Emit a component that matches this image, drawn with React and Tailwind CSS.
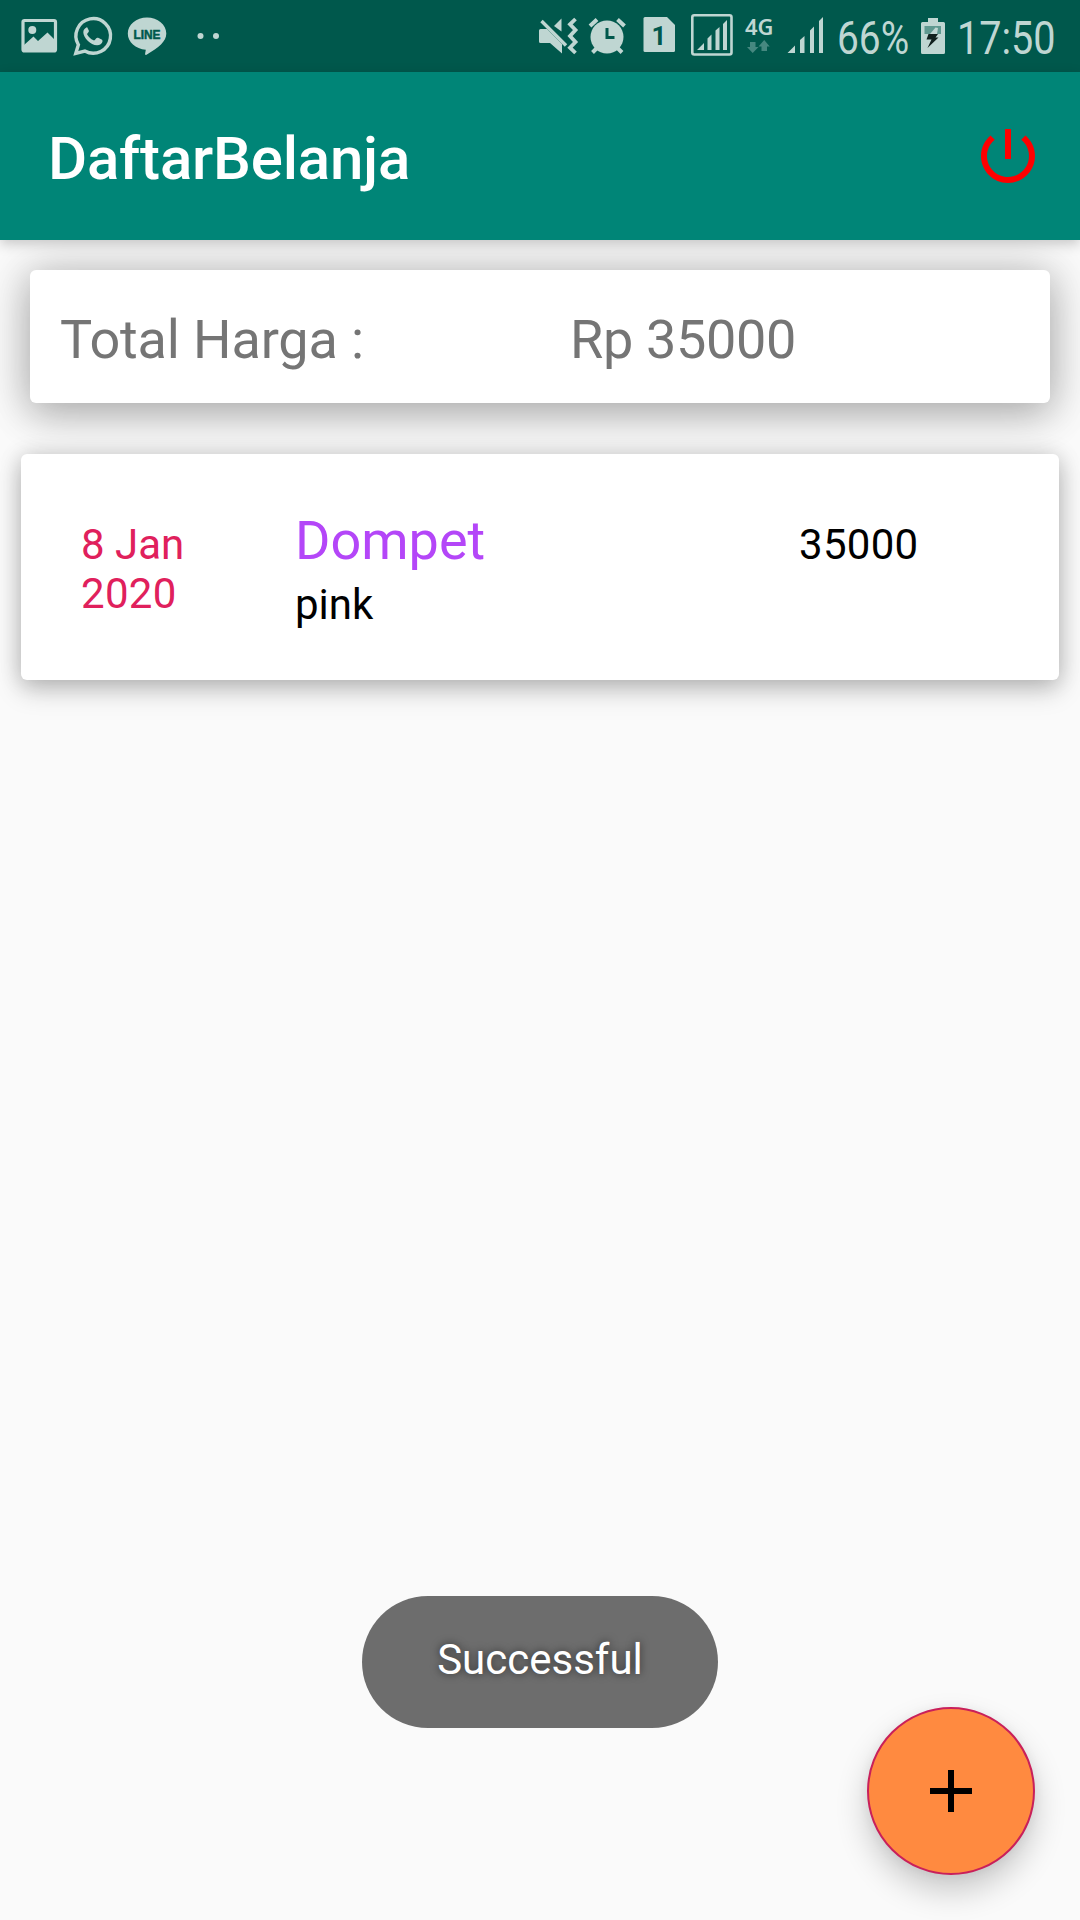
import React from "react";

const INK = "#bfd6d2";
const BAR = "#00584c";

function ImageIcon() {
  return (
    <svg className="ml-[18px] h-12 w-11 shrink-0" viewBox="18 12 44 48">
      <rect x="23" y="20.5" width="32.5" height="30.5" rx="1.5" fill="none" stroke={INK} strokeWidth="3.2" />
      <circle cx="32.3" cy="30" r="4" fill={INK} />
      <path d="M24 45 L33.5 36.5 L38 41 L47.5 32.5 L55 40 V51 H24 Z" fill={INK} />
    </svg>
  );
}

function WhatsAppIcon() {
  return (
    <svg className="ml-2 h-12 w-[46px] shrink-0" viewBox="70 12 46 48">
      <path d="M75.8 53.3 L78.4 44.8 A17.3 17.3 0 1 1 84.8 51 Z" fill="none" stroke={INK} strokeWidth="3.4" />
      <path
        d="M86.5 27.4c-1.6.6-3.2 2.4-3.2 4.8 0 5.200 7.200 13 13.800 13 2.700 0 5-1.300 5.400-3.700.1-1-.2-1.500-.9-1.900l-3.500-1.800c-.7-.3-1.300-.2-1.800.4l-1.500 1.800c-.4.4-.8.500-1.300.3-2.800-1.200-5-3.200-6.300-5.700-.2-.5-.1-.8.2-1.200l1.200-1.500c.3-.4.4-.8.200-1.300l-1.500-3c-.2-.4-.4-.4-.8-.3z"
        fill={INK}
      />
    </svg>
  );
}

function LineIcon() {
  return (
    <svg className="ml-2 h-12 w-[46px] shrink-0" viewBox="124 12 46 48">
      <path d="M147 17.500c10.700 0 19.300 7 19.300 16 0 8-7.500 14-19.800 21.200-1 .5-1.600 0-1.400-1l.7-3.900c-10.200-.7-18-7.500-18-16.200 0-9.100 8.500-16.100 19.200-16.100z" fill={INK} />
      <text x="133.500" y="38.700" textLength="27" lengthAdjust="spacingAndGlyphs" fill={BAR} stroke={BAR} strokeWidth=".5" className="font-['Liberation_Sans'] text-[12px] font-bold">
        LINE
      </text>
    </svg>
  );
}

function DotsIcon() {
  return (
    <svg className="ml-[26px] h-12 w-6 shrink-0" viewBox="196 12 24 48" fill={INK}>
      <circle cx="200.500" cy="36" r="3" />
      <circle cx="216" cy="36" r="3" />
    </svg>
  );
}

function MuteIcon() {
  return (
    <svg className="ml-auto h-12 w-11 shrink-0" viewBox="536 12 44 48">
      <path d="M539 30.500 Q539 29 540.500 29 H547 L562 44 V53.500 L550 43 H540.500 Q539 43 539 41.500 Z" fill={INK} />
      <path d="M561.500 18.500 V31.500 L554 26 Z" fill={INK} />
      <path d="M541.500 21 L566 45.500" stroke={INK} strokeWidth="3.400" />
      <path d="M575.500 19 L570 24.300 L575.500 30 L570 36 L575.500 42 L570 47.700 L575.500 53" fill="none" stroke={INK} strokeWidth="3.800" />
    </svg>
  );
}

function AlarmIcon() {
  return (
    <svg className="ml-1.5 h-12 w-[42px] shrink-0" viewBox="586 12 42 48">
      <path d="M590 26 L597 19.500 M624.500 26 L617.500 19.500 M592.500 52.500 L598 47 M622 52.500 L616.500 47" stroke={INK} strokeWidth="4" />
      <circle cx="607" cy="37" r="16.500" fill={INK} />
      <path d="M607 28 V37.500 H614.500" fill="none" stroke={BAR} strokeWidth="3" />
    </svg>
  );
}

function SimIcon() {
  return (
    <svg className="ml-3 h-12 w-[38px] shrink-0" viewBox="640 12 38 48">
      <path d="M645 17 H667 L675 25 V50.500 Q675 52 673.500 52 H645 Q643.500 52 643.500 50.500 V18.500 Q643.500 17 645 17 Z" fill={INK} />
      <text x="651.500" y="45" fill={BAR} className="font-[Roboto] text-[26px] font-bold">
        1
      </text>
    </svg>
  );
}

function BoxedSignalIcon() {
  return (
    <svg className="ml-3 h-12 w-11 shrink-0" viewBox="690 12 44 48">
      <rect x="692.300" y="15.300" width="39.200" height="39.200" rx="2" fill="none" stroke={INK} strokeWidth="2.600" />
      <path d="M697 50 L704 43 V50 Z M707.500 38.500 L711.500 34.500 V50 H707.500 Z M715.500 30.500 L719.500 27 V50 H715.500 Z M723 24 L727 20 V50 H723 Z" fill={INK} />
    </svg>
  );
}

function NetworkIcon() {
  return (
    <svg className="ml-2.5 h-12 w-[30px] shrink-0" viewBox="744 12 30 48">
      <text x="745" y="34.500" textLength="28.500" lengthAdjust="spacingAndGlyphs" fill={INK} className="font-['Noto_Sans'] text-[21px] font-semibold">
        4G
      </text>
      <path d="M750 42 H755.500 V47 H758.500 L752.700 53 L747 47 H750 Z" fill="#468880" />
      <path d="M761.500 51 H767 V46.500 H769.700 L764.200 40 L758.500 46.500 H761.500 Z" fill="#468880" />
    </svg>
  );
}

function SignalIcon() {
  return (
    <svg className="ml-3 h-12 w-[38px] shrink-0" viewBox="786 12 38 48">
      <path d="M787.500 53 L795 45.500 V53 Z M800 40 L804.500 36 V53 H800 Z M810 30.500 L814 26.500 V53 H810 Z M819 21 L823 17 V53 H819 Z" fill={INK} />
    </svg>
  );
}

function BatteryIcon() {
  return (
    <svg className="ml-2 h-12 w-[30px] shrink-0" viewBox="918 12 30 48">
      <path d="M928 18 H938 V22 H943.500 Q945 22 945 23.500 V52.500 Q945 54 943.500 54 H922.500 Q921 54 921 52.500 V23.500 Q921 22 922.500 22 H928 Z" fill={INK} />
      <rect x="924.500" y="26" width="16.500" height="8" fill="#5f9990" />
      <path d="M935.500 27.500 L930 34 H937 L938 28 Z" fill={INK} />
      <path d="M928.500 34 H938 L935.500 37.500 H938.500 L927.500 48 L931.500 39.500 H926.500 Z" fill="#10211e" />
    </svg>
  );
}

function StatusBar() {
  return (
    <div className="flex h-[72px] items-center bg-[#00584c] text-[46px] leading-[48px] text-[#bfd6d2]">
      <ImageIcon />
      <WhatsAppIcon />
      <LineIcon />
      <DotsIcon />
      <MuteIcon />
      <AlarmIcon />
      <SimIcon />
      <BoxedSignalIcon />
      <NetworkIcon />
      <SignalIcon />
      <div className="ml-[13px] w-[73px] shrink-0 pt-1">
        <span className="inline-block origin-left scale-x-[0.845] whitespace-nowrap">66%</span>
      </div>
      <BatteryIcon />
      <div className="ml-[9px] w-[123px] shrink-0 pt-1">
        <span className="inline-block origin-left scale-x-[0.86] whitespace-nowrap">17:50</span>
      </div>
    </div>
  );
}

function AppBar() {
  return (
    <header className="relative z-10 flex h-[168px] items-center justify-between bg-[#008577] pr-9 pl-12 shadow-[0_4px_12px_rgba(0,0,0,0.2)]">
      <h1 className="pt-[5px] text-[60px] leading-[70px] font-medium tracking-[-0.2px] text-white">DaftarBelanja</h1>
      <svg className="size-[72px]" viewBox="0 0 24 24" fill="#ff0000">
        <path d="M13 3h-2v10h2V3zm4.830 2.170l-1.420 1.420C17.990 7.860 19 9.810 19 12c0 3.870-3.130 7-7 7s-7-3.130-7-7c0-2.190 1.010-4.140 2.580-5.420L6.170 5.170C4.230 6.820 3 9.260 3 12c0 4.970 4.030 9 9 9s9-4.030 9-9c0-2.740-1.230-5.180-3.170-6.830z" />
      </svg>
    </header>
  );
}

export default function App() {
  return (
    <div className="relative h-[1920px] w-[1080px] overflow-hidden bg-[#fafafa] font-[Roboto,sans-serif]">
      <StatusBar />
      <AppBar />
      <main>
        <section className="mx-[30px] mt-[30px] grid h-[133px] grid-cols-[510px_1fr] rounded-[6px] bg-white px-[30px] pt-[38px] text-[54px] leading-[63px] tracking-[-0.15px] text-[#757575] shadow-[0_14px_40px_rgba(0,0,0,0.2),0_0_44px_4px_rgba(0,0,0,0.18)]">
          <span>Total Harga :</span>
          <span className="tracking-[-0.35px]">Rp 35000</span>
        </section>
        <article className="mx-[21px] mt-[51px] flex h-[226px] rounded-[6px] bg-white pl-[60px] text-[42px] leading-[49px] text-black shadow-[0_10px_26px_rgba(0,0,0,0.22),0_0_22px_rgba(0,0,0,0.15)]">
          <div className="w-[214px] pt-[66px] text-[#e0205c]">
            8 Jan
            <br />
            <span className="tracking-[0.3px]">2020</span>
          </div>
          <div className="w-[504px] pt-[55px]">
            <h2 className="text-[54px] leading-[63px] text-[#b446f8]">Dompet</h2>
            <p className="mt-2">pink</p>
          </div>
          <div className="pt-[66px] tracking-[0.3px]">35000</div>
        </article>
      </main>
      <div className="absolute top-[1596px] left-[362px] flex h-[132px] w-[356px] items-center justify-center rounded-full bg-[#6d6d6d] pb-[5px] text-[42px] leading-[49px] text-white [text-shadow:0_0_8px_rgba(0,0,0,0.6)]">
        Successful
      </div>
      <button className="absolute top-[1707px] left-[867px] flex size-[168px] items-center justify-center rounded-full border-2 border-[#c9205a] bg-[#ff8a40] shadow-[0_16px_32px_rgba(0,0,0,0.2),0_2px_12px_rgba(0,0,0,0.06)]">
        <svg className="size-[42px]" viewBox="0 0 42 42" fill="#000">
          <path d="M18 0h6v18h18v6H24v18h-6V24H0v-6h18z" />
        </svg>
      </button>
    </div>
  );
}
